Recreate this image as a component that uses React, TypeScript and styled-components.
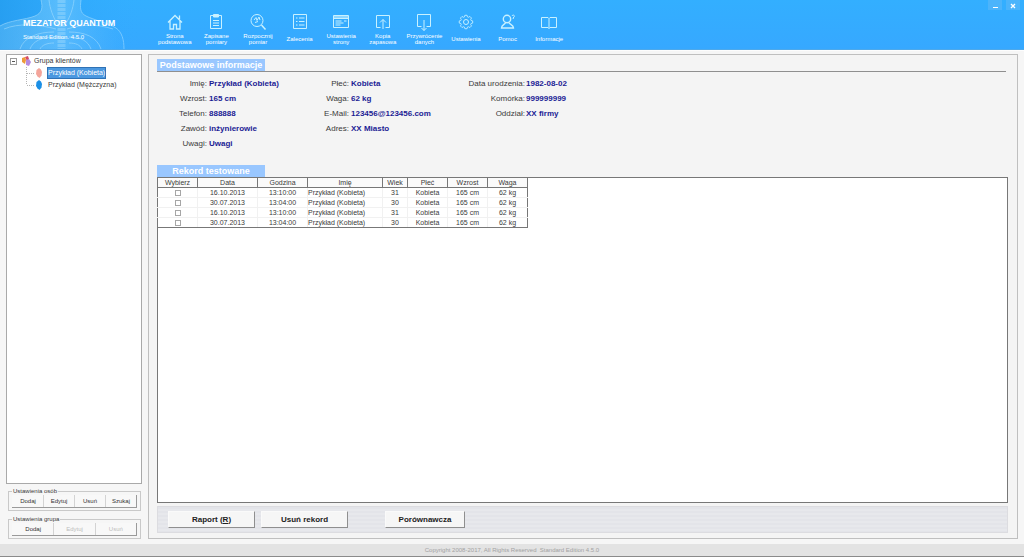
import React from "react";
import styled, { createGlobalStyle, css } from "styled-components";

const GlobalStyle = createGlobalStyle`
  *, *::before, *::after { box-sizing: border-box; }
  html, body { margin: 0; padding: 0; }
  body {
    font-family: "Liberation Sans", Arial, sans-serif;
    font-size: 8px;
    line-height: 10px;
    color: #3a3a3a;
    background: #f6f6f6;
  }
  button { font-family: inherit; margin: 0; padding: 0; cursor: pointer; }
`;

const Window = styled.div`
  display: flex;
  flex-direction: column;
  min-height: 100vh;
`;

const Header = styled.header`
  position: relative;
  display: flex;
  height: 50px;
  background: linear-gradient(#33afff, #36a8ff);
  border-bottom: 1px solid #4fa9ea;
  color: #fff;
`;

const Artwork = styled.svg`
  position: absolute;
  left: 0;
  top: 0;
  width: 146px;
  height: 49px;
`;

const Brand = styled.div`
  position: relative;
  width: 154px;
  padding: 17px 0 0 23px;
`;

const Title = styled.h1`
  margin: 0;
  font-size: 9px;
  line-height: 12px;
  font-weight: bold;
`;

const Edition = styled.p`
  margin: 2px 0 0;
  font-size: 6px;
  line-height: 12px;
`;

const Toolbar = styled.nav`
  display: grid;
  grid-template-columns: repeat(10, 1fr);
  width: 416px;
  padding-top: 13px;
`;

const ToolButton = styled.button`
  display: flex;
  flex-direction: column;
  align-items: center;
  border: 0;
  background: none;
  color: #fff;
  font-size: 6px;
  line-height: 6px;
`;

const ToolIcon = styled.svg`
  flex: none;
  width: 18px;
  height: 18px;
  fill: none;
  stroke: #c9f1ff;
  stroke-width: 1;
`;

const ToolLabel = styled.span`
  display: flex;
  align-items: center;
  justify-content: center;
  height: 14px;
  margin-top: 1px;
  white-space: pre;
  text-align: center;
`;

const WindowControls = styled.div`
  display: flex;
  gap: 4px;
  margin-left: auto;
  padding-right: 4px;
`;

const ControlButton = styled.button`
  width: 14px;
  height: 10px;
  border: 0;
  background: #4cb4fb;
  svg { display: block; width: 14px; height: 10px; stroke: #fff; fill: none; }
`;

const Main = styled.main`
  flex: 1;
  display: flex;
  gap: 6px;
  padding: 3px 6px 5px;
  border-top: 1px solid #fdfdfd;
`;

const Sidebar = styled.aside`
  flex: none;
  display: flex;
  flex-direction: column;
  width: 136px;
`;

const Tree = styled.div`
  flex: 1;
  margin-bottom: 3px;
  padding: 0 2px;
  border: 1px solid #a9a9a9;
  background: #fff;
  font-size: 7px;
`;

const TreeRow = styled.div`
  display: flex;
  align-items: center;
  height: 12px;
`;

const Expander = styled.button`
  width: 7px;
  height: 7px;
  margin-left: 1px;
  margin-right: 4px;
  border: 1px solid #9a9a9a;
  background: #fff;
  svg { display: block; width: 5px; height: 5px; }
`;

const TreeIcon = styled.svg`
  flex: none;
  width: 10px;
  height: 10px;
`;

const Branch = styled.svg`
  flex: none;
  width: 10px;
  height: 12px;
  margin-left: 15px;
  stroke: #b5b5b5;
  stroke-dasharray: 1 1;
`;

const TreeLabel = styled.button<{ $selected?: boolean; $indent?: boolean }>`
  height: 12px;
  margin-left: ${(p) => (p.$indent ? 3 : 2)}px;
  border: 1px solid ${(p) => (p.$selected ? "#2f72b5" : "transparent")};
  background: ${(p) => (p.$selected ? "#4b98e0" : "transparent")};
  color: ${(p) => (p.$selected ? "#fff" : "#3a3a3a")};
  font-size: 7px;
  line-height: 10px;
  white-space: nowrap;
`;

const Group = styled.fieldset`
  min-width: 0;
  margin: 0 1px 4px 2px;
  padding: 0 3px 2px;
  border: 1px solid #c9c9c9;
  font-size: 6px;
  line-height: 8px;
  &:last-child { margin-bottom: 0; }
`;

const GroupTitle = styled.legend`
  padding: 0 1px;
`;

const GroupButtons = styled.div`
  display: flex;
  border-right: 1px solid #9a9a9a;
  border-bottom: 1px solid #9a9a9a;
`;

const GroupButton = styled.button`
  flex: 1;
  height: 12px;
  border: 0;
  border-left: 1px solid #d3d3d3;
  background: #f8f8f8;
  color: #333;
  font-size: 6px;
  line-height: 10px;
  &:first-child { border-left-color: #f8f8f8; }
  &:disabled { color: #bdbdbd; }
`;

const Content = styled.section`
  flex: 1;
  display: flex;
  flex-direction: column;
  min-width: 0;
  padding: 4px 9px 5px 8px;
  border: 1px solid #bfbfbf;
  background: #f4f4f4;
`;

const SectionHead = styled.div`
  display: flex;
  margin-right: 2px;
  border-bottom: 1px solid #8f8f8f;
`;

const SectionTitle = styled.h2`
  width: 108px;
  margin: 0;
  background: #99c7ff;
  color: #fff;
  font-size: 9px;
  line-height: 12px;
  font-weight: bold;
  text-align: center;
  white-space: nowrap;
`;

const Details = styled.dl`
  display: grid;
  grid-template-columns: 50px 92px 50px 126px 50px 1fr;
  grid-auto-rows: 15px;
  align-items: center;
  margin: 4px 0 14px;
`;

const Term = styled.dt<{ $column: number }>`
  grid-column: ${(p) => p.$column * 2 + 1};
  justify-self: end;
  white-space: nowrap;
`;

const Value = styled.dd<{ $column: number }>`
  grid-column: ${(p) => p.$column * 2 + 2};
  margin: 0;
  padding-left: ${(p) => (p.$column === 2 ? 1 : 2)}px;
  color: #1c1c94;
  font-weight: bold;
  white-space: nowrap;
`;

const RecordsFrame = styled.div`
  flex: 1;
  border: 1px solid #777;
  background: #fff;
`;

const Records = styled.table`
  width: 371px;
  margin: -1px 0 0 -1px;
  table-layout: fixed;
  border-collapse: collapse;
  font-size: 7px;
  line-height: 9px;
`;

const cell = css`
  height: 10px;
  padding: 0;
  text-align: center;
  white-space: nowrap;
  font-weight: normal;
`;

const HeadCell = styled.th`
  ${cell}
  border: 1px solid #777;
  background: #fafafa;
`;

const Cell = styled.td<{ $left?: boolean }>`
  ${cell}
  border: 1px solid #f1f1f1;
  ${(p) => p.$left && "text-align: left;"}
  &:first-child { border-left-color: #777; }
  &:last-child { border-right-color: #777; }
  tr:last-child > & { border-bottom-color: #777; }
`;

const Tick = styled.input`
  appearance: none;
  display: block;
  width: 6px;
  height: 6px;
  margin: 0 auto;
  border: 1px solid #a6a6a6;
  background: #fff;
`;

const ActionBar = styled.div`
  display: flex;
  align-items: center;
  gap: 6px;
  height: 27px;
  margin-top: 3px;
  padding-left: 10px;
  border: 1px solid #dcdce0;
  background: repeating-linear-gradient(#e3e4e9 0 2px, #e7e8ec 2px 4px);
`;

const ActionButton = styled.button<{ $width: number; $apart?: boolean }>`
  width: ${(p) => p.$width}px;
  height: 17px;
  margin-left: ${(p) => (p.$apart ? 31 : 0)}px;
  border: 1px solid #fafafa;
  border-right-color: #8f8f8f;
  border-bottom-color: #8f8f8f;
  background: #f6f6f6;
  color: #222;
  font-size: 8px;
  font-weight: bold;
`;

const Footer = styled.footer`
  height: 13px;
  border-bottom: 1px solid #8a8a8a;
  background: #e3e3e3;
  color: #a2a2a2;
  font-size: 6px;
  line-height: 13px;
  text-align: center;
  white-space: pre;
`;

const tools: { label: string; icon: React.ReactNode }[] = [
  {
    label: "Strona\npodstawowa",
    icon: <path strokeWidth="1.300" d="M2 9.500 9 2.500l7 7M4 8v8h3.500v-4.500h3V16H14V8M13.500 2.500V6" />,
  },
  {
    label: "Zapisane\npomiary",
    icon: (
      <>
        <path d="M3.500 2.500h11v13h-11z" />
        <path d="M6.500 1.500h5v2.500h-5z" fill="#c9f1ff" />
        <path d="M6 7.500h6M6 10h6M6 12.500h6" />
      </>
    ),
  },
  {
    label: "Rozpocznij\npomiar",
    icon: (
      <>
        <circle cx="8" cy="7.500" r="6" />
        <path d="M12.500 12l4 4.500" strokeWidth="1.500" />
        <path d="M5 7l2-2.500 1 3 2-3.500 1 3M6 9.500l3-1" />
      </>
    ),
  },
  {
    label: "Zalecenia",
    icon: (
      <path d="M2.500 1.500h13v14h-13zM5 5h1.500M5 8.500h1.500M5 12h1.500M8 5h5.500M8 8.500h5.500M8 12h5.500" />
    ),
  },
  {
    label: "Ustawienia\nstrony",
    icon: (
      <>
        <path d="M1.500 2.500h15v12h-15zM1.500 5.500h15M3.500 8h6M3.500 10h8M3.500 12h5M12 8h2.500" />
        <path d="M2 4h14" strokeWidth="2" opacity="0.6" />
      </>
    ),
  },
  {
    label: "Kopia\nzapasowa",
    icon: <path d="M6.500 14.500h-4v-12h13v12h-4M9 16V6.500M6 9.500l3-3 3 3" />,
  },
  {
    label: "Przywrócenie\ndanych",
    icon: <path d="M6.500 13.500h-4v-12h13v12h-4M9 7v10.500M6.500 15 9 17.500l2.500-2.500" />,
  },
  {
    label: "Ustawienia",
    icon: (
      <>
        <path d="M7.700 2h2.600l.5 1.900 1.200.5 1.700-1 1.900 1.900-1 1.700.5 1.200 1.900.5v2.600l-1.900.5-.5 1.200 1 1.700-1.900 1.900-1.700-1-1.200.5-.5 1.900H7.700l-.5-1.900-1.200-.5-1.700 1-1.900-1.900 1-1.700-.5-1.200L1 11.300V8.700l1.900-.5.500-1.200-1-1.700 1.900-1.900 1.700 1 1.200-.5z" transform="translate(1.400 .6) scale(.84)" />
        <circle cx="9" cy="9" r="2.500" />
      </>
    ),
  },
  {
    label: "Pomoc",
    icon: (
      <>
        <circle cx="8" cy="6" r="3.700" strokeWidth="1.400" />
        <path d="M6.500 9.500c0 2-4 2-4 5.500h12c0-3.500-4.500-3.500-4.500-5.500" strokeWidth="1.400" />
        <path d="M13 3c.5-1.500 2.800-1 2.300.5L14.200 5v1" />
      </>
    ),
  },
  {
    label: "Informacje",
    icon: <path d="M1.500 4.500H8l1 1 1-1h6.500v10H10l-1 1-1-1H1.500zM9 5.500v10" />,
  },
];

const details: [number, number, string, string][] = [
  [0, 0, "Imię", "Przykład (Kobieta)"],
  [0, 1, "Płeć", "Kobieta"],
  [0, 2, "Data urodzenia", "1982-08-02"],
  [1, 0, "Wzrost", "165 cm"],
  [1, 1, "Waga", "62 kg"],
  [1, 2, "Komórka", "999999999"],
  [2, 0, "Telefon", "888888"],
  [2, 1, "E-Mail", "123456@123456.com"],
  [2, 2, "Oddział", "XX firmy"],
  [3, 0, "Zawód", "inżynierowie"],
  [3, 1, "Adres", "XX Miasto"],
  [4, 0, "Uwagi", "Uwagi"],
];

const columns: [string, number][] = [
  ["Wybierz", 40],
  ["Data", 60],
  ["Godzina", 50],
  ["Imię", 75],
  ["Wiek", 25],
  ["Płeć", 40],
  ["Wzrost", 40],
  ["Waga", 40],
];

const october = ["16.10.2013", "13:10:00", "Przykład (Kobieta)", "31", "Kobieta", "165 cm", "62 kg"];
const july = ["30.07.2013", "13:04:00", "Przykład (Kobieta)", "30", "Kobieta", "165 cm", "62 kg"];
const records = [october, july, october, july];

/* Translucent neck, shoulders and rib cage behind the product name. */
function Anatomy() {
  return (
    <Artwork viewBox="0 0 146 49" aria-hidden="true">
      <defs>
        <linearGradient id="backdrop" x1="0" x2="1">
          <stop offset="0" stopColor="#1c93e6" stopOpacity="0.55" />
          <stop offset="1" stopColor="#35abff" stopOpacity="0" />
        </linearGradient>
        <linearGradient id="body" x1="0" x2="1">
          <stop offset="0" stopColor="#66bff5" stopOpacity="0.45" />
          <stop offset="0.5" stopColor="#8ad4ff" stopOpacity="0.45" />
          <stop offset="1" stopColor="#5cbcff" stopOpacity="0.1" />
        </linearGradient>
      </defs>
      <path d="M0 0h146v49H0z" fill="url(#backdrop)" />
      <path
        d="M41 0c2 8 1 13-6 16C25 20 10 20 0 26v23h124c0-9-2-17-8-21-8-5-22-8-30-12-6-3-6-8-5-16z"
        fill="url(#body)"
      />
      <g fill="none" stroke="#a9e0ff" opacity="0.55">
        <path d="M41 0c2 8 1 13-6 16C25 20 10 20 0 26M81 0c-1 8-1 13 5 16 8 4 22 7 30 12 6 4 8 12 8 21" />
        <path d="M49 0c1 9 4 17 9 25M74 0c-1 9-4 17-9 25M4 29c14-6 34-5 52 0M67 29c16-5 30-5 46 0" />
        <path d="M54 32c-16 0-30 5-34 17M69 32c16 0 28 5 32 17M54 37c-12 0-21 4-24 12M69 37c12 0 19 4 22 12M54 43c-7 0-12 2-14 6M69 43c7 0 11 2 13 6" />
      </g>
      <path d="M61.500 0v49" stroke="#d5f3ff" strokeWidth="8" strokeDasharray="3 1" opacity="0.25" />
    </Artwork>
  );
}

function PersonIcon({ color }: { color: string }) {
  return (
    <TreeIcon viewBox="0 0 10 10" aria-hidden="true">
      <path d="M5 0 7 1.500 8 4 7.500 7.500 5.500 10 3.500 8.500 2 6 2.500 2z" fill={color} />
    </TreeIcon>
  );
}

export default function App() {
  return (
    <Window>
      <GlobalStyle />
      <Header>
        <Anatomy />
        <Brand>
          <Title>MEZATOR QUANTUM</Title>
          <Edition>Standard Edition. 4.5.0</Edition>
        </Brand>
        <Toolbar>
          {tools.map((tool, i) => (
            <ToolButton key={i} type="button">
              <ToolIcon viewBox="0 0 18 18" aria-hidden="true">{tool.icon}</ToolIcon>
              <ToolLabel>{tool.label}</ToolLabel>
            </ToolButton>
          ))}
        </Toolbar>
        <WindowControls>
          <ControlButton type="button" aria-label="Minimalizuj">
            <svg viewBox="0 0 14 10"><path d="M5 7.500h5" /></svg>
          </ControlButton>
          <ControlButton type="button" aria-label="Zamknij">
            <svg viewBox="0 0 14 10"><path d="M5 4l4 4M9 4l-4 4" strokeWidth="1.300" /></svg>
          </ControlButton>
        </WindowControls>
      </Header>

      <Main>
        <Sidebar>
          <Tree>
            <TreeRow>
              <Expander type="button" aria-label="Zwiń grupę">
                <svg viewBox="0 0 5 5"><path d="M1 2.500h3" stroke="#555" /></svg>
              </Expander>
              <TreeIcon viewBox="0 0 10 10" aria-hidden="true">
                <path d="M1 2 4 1l1 3-1 4-3-2z" fill="#ee9a3a" />
                <path d="M4 1l3-1 1 3-2 2z" fill="#d64b63" />
                <path d="M5 4l3-1 2 3-2 4-3-1z" fill="#b58be0" />
              </TreeIcon>
              <TreeLabel type="button">Grupa klientów</TreeLabel>
            </TreeRow>
            <TreeRow>
              <Branch viewBox="0 0 10 12"><path d="M2.500 0v12M3 6.500h7" /></Branch>
              <PersonIcon color="#f4a59b" />
              <TreeLabel type="button" $selected $indent>Przykład (Kobieta)</TreeLabel>
            </TreeRow>
            <TreeRow>
              <Branch viewBox="0 0 10 12"><path d="M2.500 0v6M3 6.500h7" /></Branch>
              <PersonIcon color="#1b8fe6" />
              <TreeLabel type="button" $indent>Przykład (Mężczyzna)</TreeLabel>
            </TreeRow>
          </Tree>
          <Group>
            <GroupTitle>Ustawienia osób</GroupTitle>
            <GroupButtons>
              <GroupButton type="button">Dodaj</GroupButton>
              <GroupButton type="button">Edytuj</GroupButton>
              <GroupButton type="button">Usuń</GroupButton>
              <GroupButton type="button">Szukaj</GroupButton>
            </GroupButtons>
          </Group>
          <Group>
            <GroupTitle>Ustawienia grupa</GroupTitle>
            <GroupButtons>
              <GroupButton type="button">Dodaj</GroupButton>
              <GroupButton type="button" disabled>Edytuj</GroupButton>
              <GroupButton type="button" disabled>Usuń</GroupButton>
            </GroupButtons>
          </Group>
        </Sidebar>

        <Content>
          <SectionHead>
            <SectionTitle>Podstawowe informacje</SectionTitle>
          </SectionHead>
          <Details>
            {details.map(([row, column, term, value]) => (
              <React.Fragment key={`${row}-${column}`}>
                <Term $column={column}>{term}:</Term>
                <Value $column={column}>{value}</Value>
              </React.Fragment>
            ))}
          </Details>
          <SectionTitle>Rekord testowane</SectionTitle>
          <RecordsFrame>
            <Records>
              <colgroup>
                {columns.map(([name, width]) => (
                  <col key={name} width={width} />
                ))}
              </colgroup>
              <thead>
                <tr>
                  {columns.map(([name]) => (
                    <HeadCell key={name} scope="col">{name}</HeadCell>
                  ))}
                </tr>
              </thead>
              <tbody>
                {records.map((record, i) => (
                  <tr key={i}>
                    <Cell>
                      <Tick type="checkbox" aria-label={`Wybierz ${record[0]}`} />
                    </Cell>
                    {record.map((text, j) => (
                      <Cell key={j} $left={j === 2}>{text}</Cell>
                    ))}
                  </tr>
                ))}
              </tbody>
            </Records>
          </RecordsFrame>
          <ActionBar>
            <ActionButton type="button" $width={87}>Raport (<u>R</u>)</ActionButton>
            <ActionButton type="button" $width={87}>Usuń rekord</ActionButton>
            <ActionButton type="button" $width={80} $apart>Porównawcza</ActionButton>
          </ActionBar>
        </Content>
      </Main>

      <Footer>Copyright 2008-2017, All Rights Reserved  Standard Edition 4.5.0</Footer>
    </Window>
  );
}
